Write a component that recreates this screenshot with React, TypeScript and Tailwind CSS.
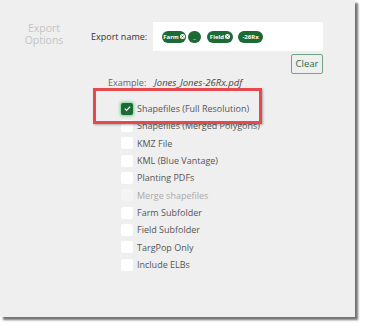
import React from "react";

const items = [
  { label: "Shapefiles (Full Resolution)", checked: true },
  { label: "Shapefiles (Merged Polygons)" },
  { label: "KMZ File" },
  { label: "KML (Blue Vantage)" },
  { label: "Planting PDFs" },
  { label: "Merge shapefiles", disabled: true },
  { label: "Farm Subfolder" },
  { label: "Field Subfolder" },
  { label: "TargPop Only" },
  { label: "Include ELBs" },
];

function Chip({ text, x, w }: { text: string; x?: boolean; w: string }) {
  return (
    <span className={`flex items-center justify-center gap-[1px] h-[12px] rounded-full bg-[#1d6a36] text-[6px] font-bold text-white leading-none ${w}`}>
      {text}
      {x && (
        <svg width="5" height="5" viewBox="0 0 10 10">
          <circle cx="5" cy="5" r="5" fill="#fff" />
          <path d="M3.2 3.2l3.6 3.6M6.8 3.2l-3.6 3.6" stroke="#1d6a36" strokeWidth="1.8" />
        </svg>
      )}
    </span>
  );
}

export default function App() {
  return (
    <div className="w-[365px] h-[325px] bg-white" style={{ fontFamily: '"Open Sans", sans-serif' }}>
      <div className="relative w-[355px] h-[317px] bg-[#efefef] shadow-[3px_3px_2px_rgba(0,0,0,0.55)] pt-[22px]">
        <div className="flex items-start">
          <div className="w-[86px] pl-[2px] text-center text-[10.5px] leading-[12px] text-[#c4c4c4]">
            Export
            <br />
            Options
          </div>
          <div className="ml-[5px] w-[62px] mt-[8px] text-[9px] leading-[13px] text-[#333]">Export name:</div>
          <div className="w-[170px] h-[29px] bg-white flex items-center pl-[9px] gap-[2px]">
            <Chip text="Farm" x w="w-[24px]" />
            <Chip text="_" w="w-[13px]" />
            <span className="w-[2px]" />
            <Chip text="Field" x w="w-[26px]" />
            <span className="w-[1px]" />
            <Chip text="-26Rx" w="w-[25px]" />
          </div>
        </div>
        <div className="flex justify-end pr-[32px] mt-[3px]">
          <div className="h-[20px] w-[32px] border border-[#6fa487] rounded-[2px] flex items-center justify-center text-[9.5px] text-[#2c6b47]">
            Clear
          </div>
        </div>
        <div className="flex mt-[2px] text-[9px] leading-[14px]">
          <span className="ml-[108px] text-[#666]">Example:</span>
          <span className="ml-[8px] italic text-[9.5px] text-[#444]">Jones_Jones-26Rx.pdf</span>
        </div>
        <div className="ml-[121px] mt-[10px] flex flex-col">
          {items.map((it) => (
            <div key={it.label} className="flex items-center h-[17.33px]">
              {it.checked ? (
                <div className="w-[12px] h-[12px] rounded-[2px] bg-[#1d6a36] shadow-[0_0_3px_1px_rgba(60,200,100,0.7)] flex items-center justify-center">
                  <svg width="9" height="9" viewBox="0 0 10 10">
                    <path d="M2 5.2l2 2 4-4.4" stroke="#fff" strokeWidth="1.3" fill="none" />
                  </svg>
                </div>
              ) : (
                <div className={`w-[12px] h-[12px] rounded-[2px] ${it.disabled ? "bg-[#f4f4f4]" : "bg-white"}`} />
              )}
              <span className={`ml-[4px] text-[9px] ${it.disabled ? "text-[#aaa]" : "text-[#555]"}`}>{it.label}</span>
            </div>
          ))}
        </div>
        <div className="absolute left-[93px] top-[88px] w-[169px] h-[36px] border-[3px] border-[#e5484d] shadow-[1px_1px_2px_rgba(0,0,0,0.3)]" />
      </div>
    </div>
  );
}
